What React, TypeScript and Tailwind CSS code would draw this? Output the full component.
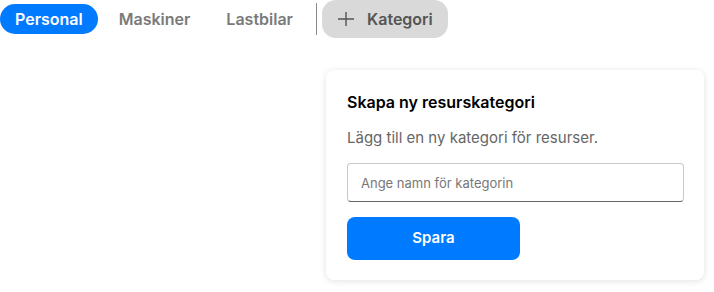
const tabs = ["Personal", "Maskiner", "Lastbilar"];

function PlusIcon() {
  return (
    <svg width="16" height="16" viewBox="0 0 16 16" className="shrink-0 text-[#555]">
      <path d="M0 8h16M8 1v14" stroke="currentColor" strokeWidth="1.4" fill="none" />
    </svg>
  );
}

export default function App() {
  return (
    <div className="h-[292px] w-[714px] bg-white font-['Inter',sans-serif]">
      {/* Category tabs */}
      <div className="flex h-[38px] items-center">
        {tabs.map((t, i) => (
          <button
            key={t}
            className={`mr-[6px] h-[30px] rounded-full px-[15px] text-[16px] font-semibold ${
              i === 0 ? "bg-[#007aff] text-white" : "text-[#7a7a7a]"
            }`}
          >
            {t}
          </button>
        ))}
        <span className="ml-[2px] h-[32px] w-px bg-[#8a8a8a]" />
        <button className="ml-[5px] flex h-[38px] items-center gap-[13px] rounded-[14px] bg-[#d9d9d9] pl-[16px] pr-[15px] text-[16px] font-semibold text-[#555]">
          <PlusIcon />
          Kategori
        </button>
      </div>

      {/* New category card */}
      <div className="ml-[326px] mt-[32px] w-[378px] rounded-lg bg-white px-[21px] pt-[22px] pb-[20px] shadow-[0_1px_6px_rgba(0,0,0,0.12)]">
        <h2 className="text-[16px] font-semibold leading-[21px] text-black">
          Skapa ny resurskategori
        </h2>
        <p className="mt-[15px] text-[15px] leading-[20px] text-[#666]">
          Lägg till en ny kategori för resurser.
        </p>
        <input
          placeholder="Ange namn för kategorin"
          className="mt-[15px] block h-[39px] w-[337px] rounded-[4px] border border-[#c8c8c8] border-b-[#666] px-[13px] text-[13px] text-black placeholder:text-[#777] outline-none"
        />
        <button className="mt-[15px] h-[43px] w-[173px] rounded-lg bg-[#007aff] text-[15px] font-semibold text-white">
          Spara
        </button>
      </div>
    </div>
  );
}
